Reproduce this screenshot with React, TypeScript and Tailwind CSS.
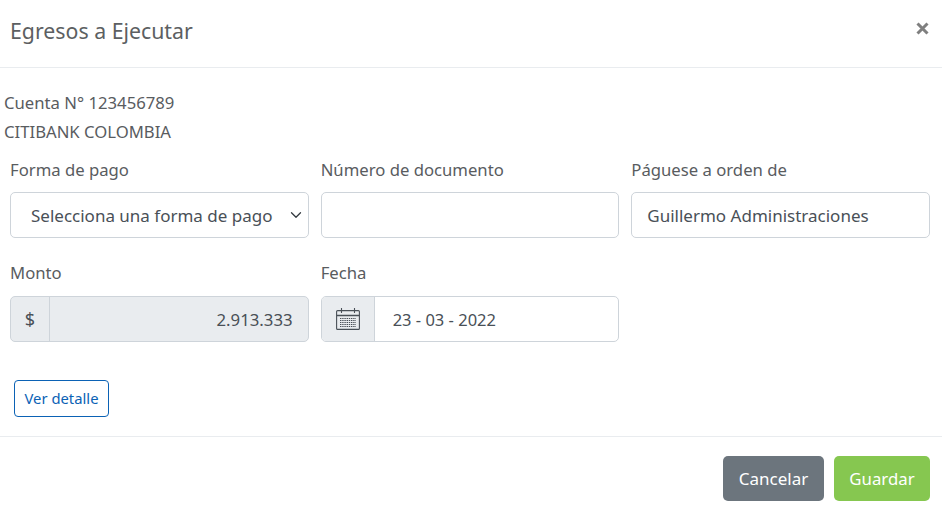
const font = "font-['Noto_Sans','Lato',sans-serif]";

function CalendarIcon() {
    return (
        <svg width="26" height="24" viewBox="0 0 26 24" fill="none" stroke="#495057" strokeWidth="1.1">
            <rect x="1.6" y="3.6" width="22.8" height="18.8" rx="1" />
            <path d="M1.6 8.5h22.8" strokeWidth="1.6" />
            <path d="M6.5 1v5M19.5 1v5" />
            <path d="M5 11.5h16M5 13.5h16M5 15.5h16M5 17.5h16M5 19.5h16" strokeDasharray="1.4 0.8" strokeWidth="1.2" />
        </svg>
    );
}

export default function App() {
    return (
        <div className={`${font} h-[510px] w-[942px] overflow-hidden bg-white text-[16.7px] text-[#595c5f]`}>
            {/* Cabecera */}
            <div className="flex h-[68px] items-center justify-between border-b border-[#e9ecef] pr-[12px] pl-[10px]">
                <h5 className="-mt-[6px] text-[21.3px] leading-[30px] font-normal text-[#5c5f62]">Egresos a Ejecutar</h5>
                <span className="-mt-[11px] flex h-[16px] w-[16px] items-center justify-center">
                    <svg width="13" height="13" viewBox="0 0 13 13" stroke="#7f7f7f" strokeWidth="3">
                        <path d="M1.5 1.5l10 10M11.5 1.5l-10 10" />
                    </svg>
                </span>
            </div>

            {/* Cuerpo */}
            <div className="h-[368px] pt-[20px]">
                <div className="pl-[4px] leading-[29px]">
                    <p>Cuenta N° 123456789</p>
                    <p>CITIBANK COLOMBIA</p>
                </div>

                <div className="mt-[10px] grid w-[930px] grid-cols-3 gap-x-[12px] pl-[10px] [&_label]:block [&_label]:h-[36px] [&_label]:leading-[27px]">
                    <div>
                        <label>Forma de pago</label>
                        <div className="flex h-[46px] items-center justify-between rounded-[5px] border border-[#ced4da] pr-[6px] pl-[20px] text-[17px] text-[#495057]">
                            <span className="pt-[2px]">Selecciona una forma de pago</span>
                            <svg width="12" height="12" viewBox="0 0 16 16" fill="none" stroke="#343a40" strokeWidth="1.7" strokeLinecap="round" strokeLinejoin="round">
                                <path d="M2 5l6 6 6-6" />
                            </svg>
                        </div>
                    </div>
                    <div>
                        <label>Número de documento</label>
                        <div className="h-[46px] rounded-[5px] border border-[#ced4da]" />
                    </div>
                    <div>
                        <label>Páguese a orden de</label>
                        <div className="flex h-[46px] items-center rounded-[5px] border border-[#ced4da] px-[15px] pt-[2px] text-[17px] text-[#495057]">
                            Guillermo Administraciones
                        </div>
                    </div>

                    <div className="mt-[21px] [&_label]:h-[37px]">
                        <label>Monto</label>
                        <div className="flex h-[46px] overflow-hidden rounded-[5px] border border-[#ced4da] bg-[#e9ecef] text-[16.8px] text-[#495057]">
                            <span className="flex w-[39px] items-center justify-center border-r border-[#ced4da] text-[18px]">$</span>
                            <span className="flex flex-1 items-center justify-end pt-[2px] pr-[15px]">2.913.333</span>
                        </div>
                    </div>
                    <div className="mt-[21px] [&_label]:h-[37px]">
                        <label>Fecha</label>
                        <div className="flex h-[46px] overflow-hidden rounded-[5px] border border-[#ced4da] text-[16.5px] text-[#495057]">
                            <span className="flex w-[53px] items-center justify-center border-r border-[#ced4da] bg-[#e9ecef]">
                                <CalendarIcon />
                            </span>
                            <span className="flex flex-1 items-center pt-[2px] pl-[18px]">23 - 03 - 2022</span>
                        </div>
                    </div>
                </div>

                <button className="mt-[38px] ml-[14px] h-[37px] w-[95px] rounded-[4px] border border-[#0b62b5] text-[14.8px] text-[#0b62b5]">
                    Ver detalle
                </button>
            </div>

            {/* Pie */}
            <div className="flex justify-end gap-[10px] border-t border-[#e9ecef] pt-[19px] pr-[12px]">
                <button className="h-[45px] w-[101px] rounded-[5px] bg-[#6c757d] text-[17px] text-white">Cancelar</button>
                <button className="h-[45px] w-[96px] rounded-[5px] bg-[#86c750] text-[16.8px] text-white">Guardar</button>
            </div>
        </div>
    );
}
